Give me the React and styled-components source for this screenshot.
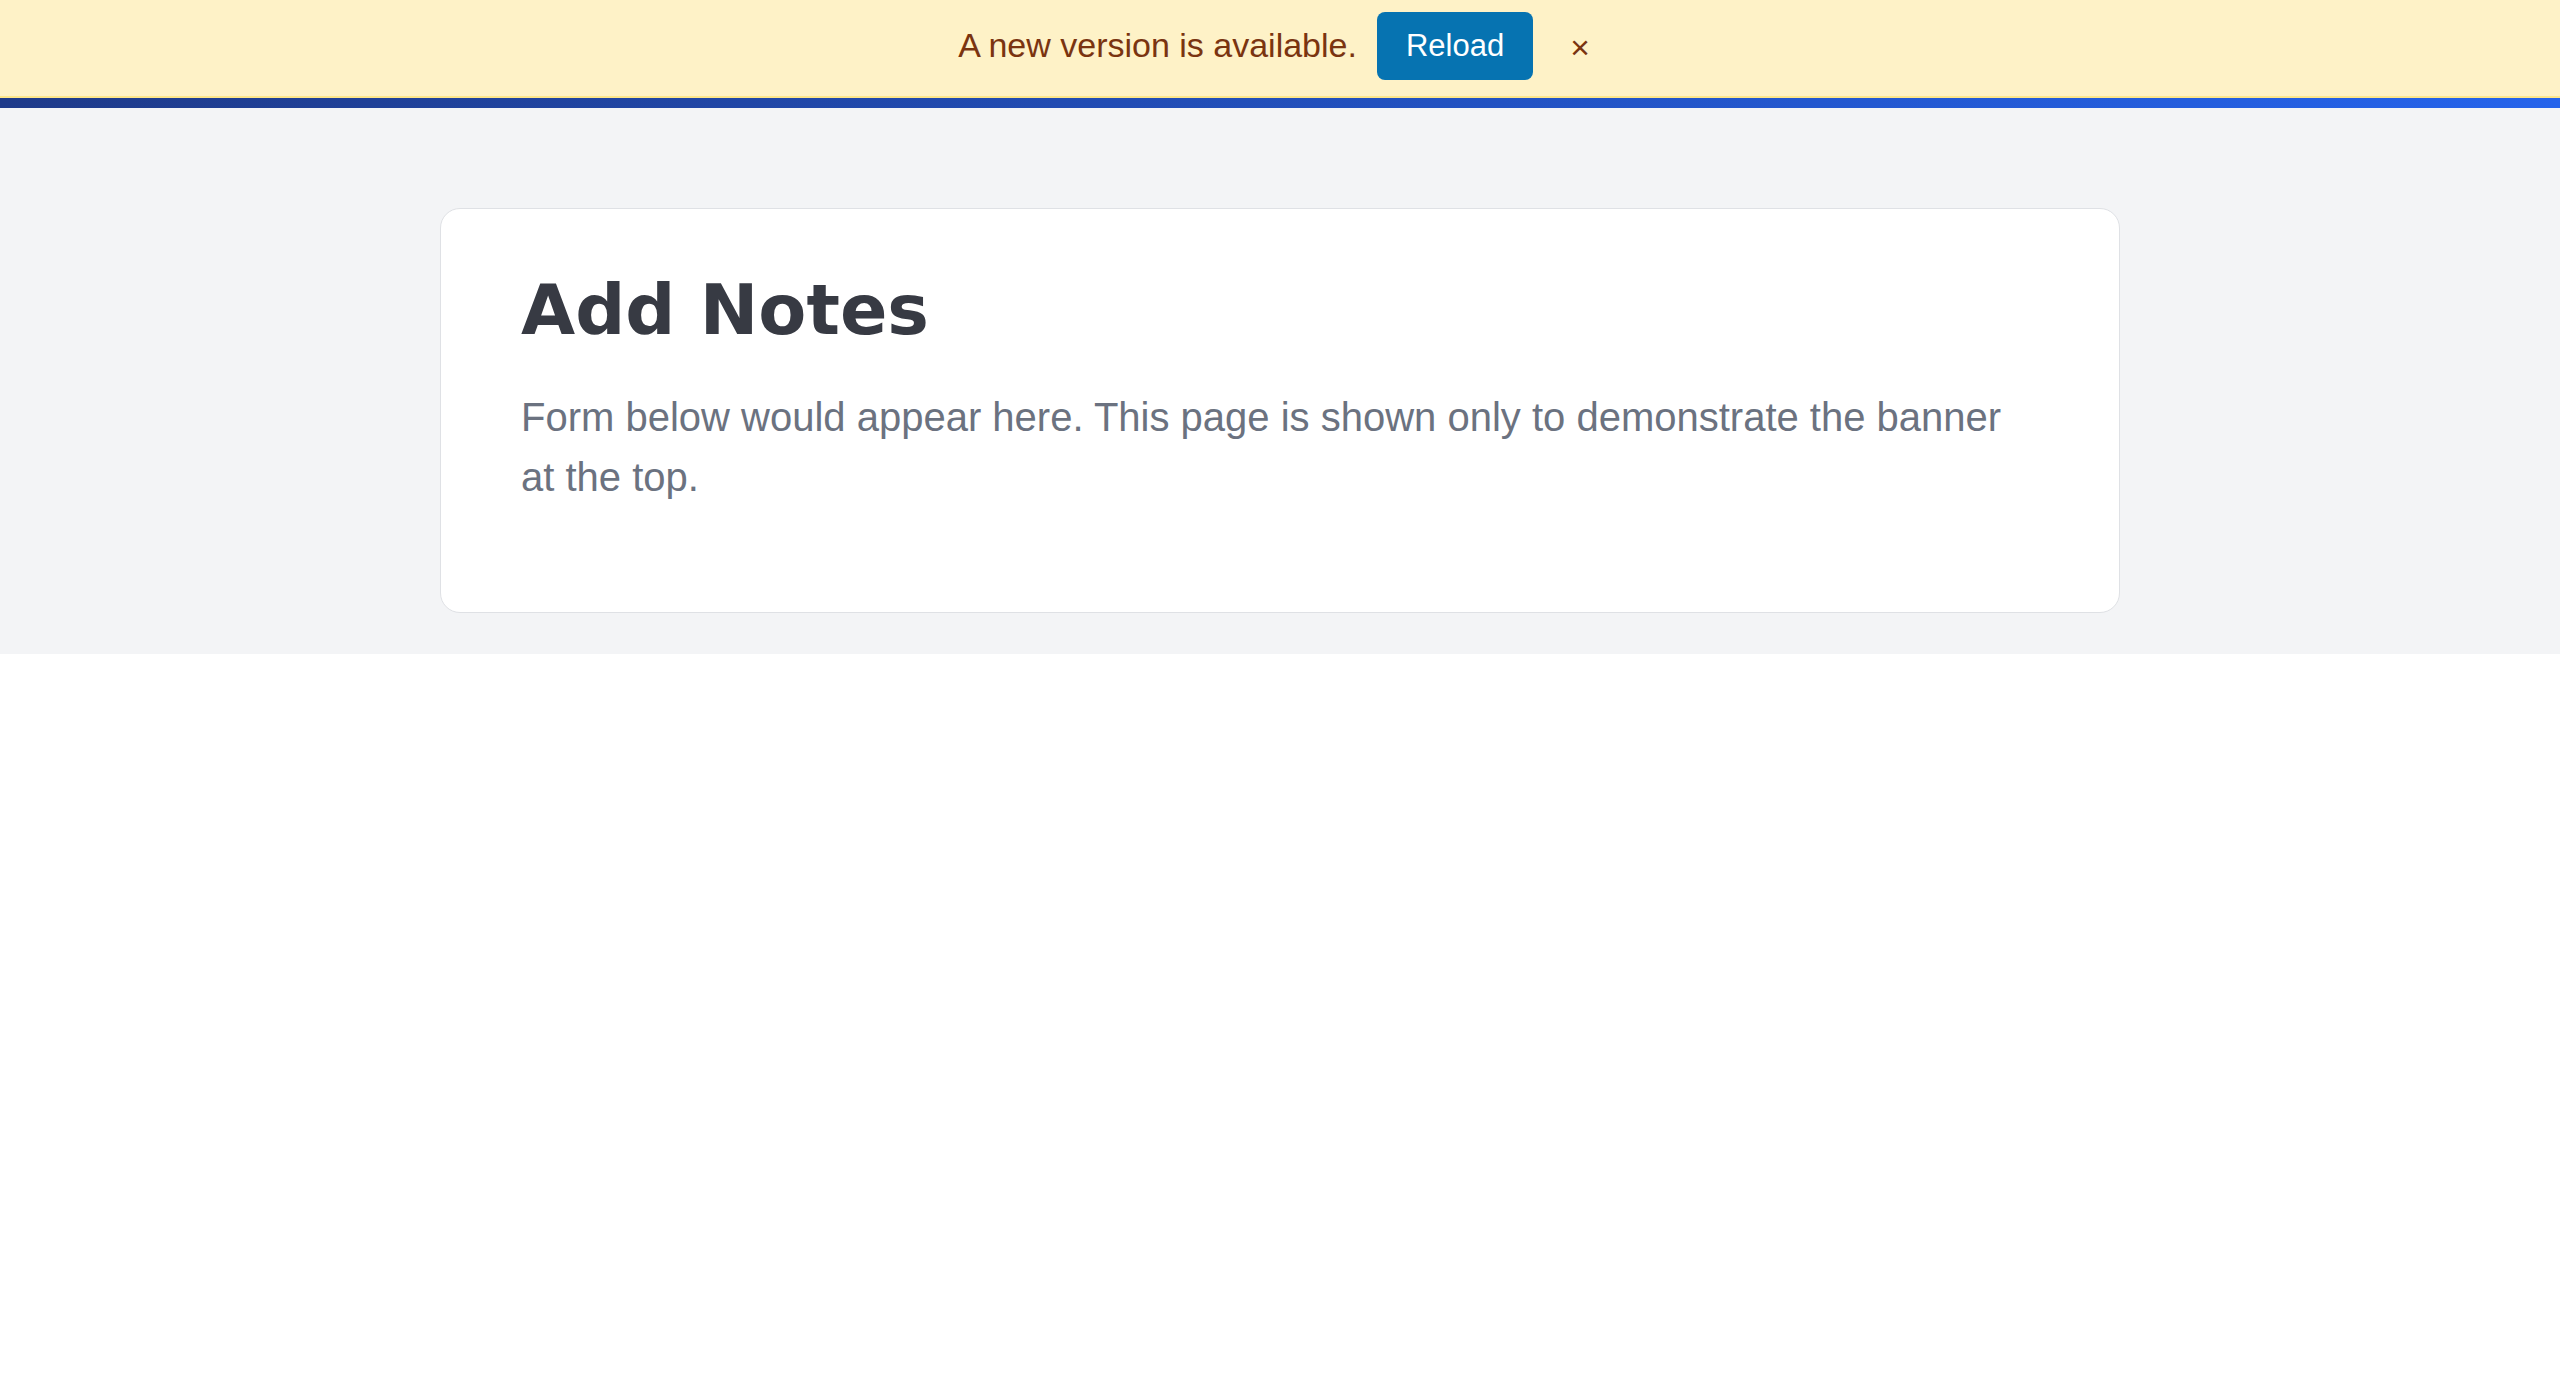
import React, { useState } from 'react';
import styled, { createGlobalStyle } from 'styled-components';

const GlobalStyle = createGlobalStyle`
  html, body {
    margin: 0;
    padding: 0;
    background: #ffffff;
    font-family: 'Liberation Sans', Arial, sans-serif;
  }
`;

const Banner = styled.div`
  height: 96px;
  background: #fef2c7;
  border-bottom: 2px solid #fde68a;
  display: flex;
  align-items: center;
  justify-content: center;
  gap: 20px;
  color: #7a3410;
  font-size: 34px;
`;

const BannerText = styled.span`
  line-height: 1;
  margin-top: -6px;
`;

const ReloadButton = styled.button`
  background: #0673b1;
  color: #ffffff;
  border: none;
  border-radius: 8px;
  height: 68px;
  padding: 0 29px;
  font-family: inherit;
  font-size: 31px;
  cursor: pointer;
  margin-top: -4px;
`;

const CloseButton = styled.button`
  background: none;
  border: none;
  color: #7a3410;
  font-family: 'Liberation Sans', Arial, sans-serif;
  font-size: 33.6px;
  padding: 0 12px 0 17px;
  cursor: pointer;
`;

const Stripe = styled.div`
  height: 10px;
  background: linear-gradient(90deg, #1e3a8a 0%, #2563eb 100%);
`;

const Main = styled.main`
  background: #f3f4f6;
  padding: 100px 0 41px;
`;

const Card = styled.section`
  max-width: 1680px;
  box-sizing: border-box;
  margin: 0 auto;
  background: #ffffff;
  border: 1px solid #dfe1e5;
  border-radius: 20px;
  padding: 60px 80px 105px;
`;

const Title = styled.h1`
  margin: 0 0 36px;
  font-family: 'DejaVu Sans', sans-serif;
  font-weight: 700;
  font-size: 70px;
  line-height: normal;
  color: #373a43;
`;

const Lead = styled.p`
  margin: 0;
  font-size: 40px;
  line-height: 60px;
  color: #6b7280;
`;

const App = () => {
  const [showBanner, setShowBanner] = useState(true);

  return (
    <>
      <GlobalStyle />
      {showBanner && (
        <Banner>
          <BannerText>A new version is available.</BannerText>
          <ReloadButton type="button">Reload</ReloadButton>
          <CloseButton type="button" aria-label="Dismiss" onClick={() => setShowBanner(false)}>
            ×
          </CloseButton>
        </Banner>
      )}
      <Stripe />
      <Main>
        <Card>
          <Title>Add Notes</Title>
          <Lead>
            Form below would appear here. This page is shown only to demonstrate the banner at the top.
          </Lead>
        </Card>
      </Main>
    </>
  );
};

export default App;
